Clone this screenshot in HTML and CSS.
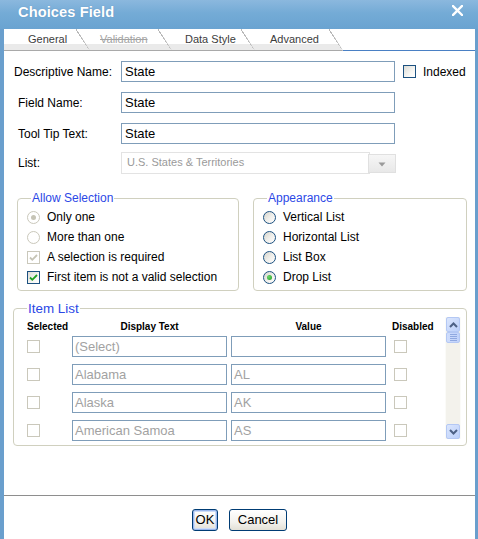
FILE: index.html
```html
<!DOCTYPE html>
<html>
<head>
<meta charset="utf-8">
<title>Choices Field</title>
<link rel="stylesheet" href="styles.css">
</head>
<body>
<div class="window">
  <div class="titlebar">
    <span class="title">Choices Field</span>
    <svg class="close" width="11" height="11" viewBox="0 0 11 11"><path d="M1 1L10 10M10 1L1 10" stroke="#fff" stroke-width="2.4" stroke-linecap="square"/></svg>
  </div>
  <div class="content">
    <div class="tabs">
      <div class="tab t1">General</div>
      <div class="tab t2"><span class="disabled-tab">Validation</span></div>
      <div class="tab t3">Data Style</div>
      <div class="tab t4">Advanced</div>
      <div class="tabfill"></div>
    </div>
    <div class="form">
      <div class="row">
        <div class="label wide">Descriptive Name:</div>
        <div class="textbox">State</div>
        <span class="cb idx"></span>
        <span class="cblabel">Indexed</span>
      </div>
      <div class="row">
        <div class="label">Field Name:</div>
        <div class="textbox">State</div>
      </div>
      <div class="row">
        <div class="label">Tool Tip Text:</div>
        <div class="textbox">State</div>
      </div>
      <div class="row selrow">
        <div class="label">List:</div>
        <div class="select">U.S. States &amp; Territories</div>
        <div class="dropbtn"><svg width="8" height="5" viewBox="0 0 8 5"><path d="M0.5 0.5H7.5L4 4.5Z" fill="#9a9a9a"/></svg></div>
      </div>

      <div class="groups">
        <fieldset class="group allow">
          <legend>Allow Selection</legend>
          <div class="opt"><span class="radio dis on"></span>Only one</div>
          <div class="opt"><span class="radio dis"></span>More than one</div>
          <div class="opt"><span class="cb dis"><svg width="11" height="11" viewBox="0 0 11 11"><path d="M2 5.5L4.3 7.8L9 3" fill="none" stroke="#c6c4b6" stroke-width="1.8"/></svg></span>A selection is required</div>
          <div class="opt"><span class="cb"><svg width="11" height="11" viewBox="0 0 11 11"><path d="M2 5.5L4.3 7.8L9 3" fill="none" stroke="#21a121" stroke-width="1.8"/></svg></span>First item is not a valid selection</div>
        </fieldset>
        <fieldset class="group appear">
          <legend>Appearance</legend>
          <div class="opt"><span class="radio"></span>Vertical List</div>
          <div class="opt"><span class="radio"></span>Horizontal List</div>
          <div class="opt"><span class="radio"></span>List Box</div>
          <div class="opt"><span class="radio on"></span>Drop List</div>
        </fieldset>
      </div>

      <fieldset class="group items">
        <legend>Item List</legend>
        <div class="itemwrap">
          <div class="scrollarea">
            <div class="grid head">
              <div class="h-sel">Selected</div>
              <div class="h-c">Display Text</div>
              <div class="h-c">Value</div>
              <div class="h-dis">Disabled</div>
            </div>
            <div class="grid irow">
              <span class="cb dis"></span>
              <div class="itext">(Select)</div>
              <div class="itext"></div>
              <span class="cb dis dcb"></span>
            </div>
            <div class="grid irow">
              <span class="cb dis"></span>
              <div class="itext">Alabama</div>
              <div class="itext">AL</div>
              <span class="cb dis dcb"></span>
            </div>
            <div class="grid irow">
              <span class="cb dis"></span>
              <div class="itext">Alaska</div>
              <div class="itext">AK</div>
              <span class="cb dis dcb"></span>
            </div>
            <div class="grid irow">
              <span class="cb dis"></span>
              <div class="itext">American Samoa</div>
              <div class="itext">AS</div>
              <span class="cb dis dcb"></span>
            </div>
          </div>
          <div class="scrollbar">
            <div class="sbtn"><svg width="9" height="6" viewBox="0 0 9 6"><path d="M1 5L4.5 1.5L8 5" fill="none" stroke="#4d6185" stroke-width="2"/></svg></div>
            <div class="thumb"><span></span><span></span><span></span><span></span></div>
            <div class="track"></div>
            <div class="sbtn"><svg width="9" height="6" viewBox="0 0 9 6"><path d="M1 1L4.5 4.5L8 1" fill="none" stroke="#4d6185" stroke-width="2"/></svg></div>
          </div>
        </div>
      </fieldset>
    </div>
    <div class="footer">
      <div class="btn ok">OK</div>
      <div class="btn">Cancel</div>
    </div>
  </div>
</div>
</body>
</html>
```

FILE: styles.css
```css
* { box-sizing: border-box; }
html, body { margin: 0; padding: 0; }
body {
  font-family: "Liberation Sans", Arial, sans-serif;
  background: #fff;
}
.window {
  width: 478px;
  height: 539px;
  display: flex;
  flex-direction: column;
  background: #6a9fcd;
}
.titlebar {
  height: 29px;
  flex: none;
  display: flex;
  align-items: flex-start;
  justify-content: space-between;
  padding: 3px 15px 0 18px;
  background: linear-gradient(#8bb8de, #74abd6 45%, #6aa3d1);
}
.title {
  color: #fff;
  font-weight: bold;
  font-size: 14.6px;
  line-height: 18px;
  letter-spacing: 0.1px;
  text-shadow: 0 0 1px rgba(40, 80, 130, 0.35);
}
.close { margin-top: 2px; }
.content {
  flex: 1;
  margin: 0 3px 0 4px;
  background: #fff;
  display: flex;
  flex-direction: column;
}
/* tabs */
.tabs {
  display: flex;
  height: 22px;
  flex: none;
}
.tab {
  position: relative;
  height: 22px;
  margin-right: -12px;
  font-size: 11px;
  line-height: 21px;
  color: #3c3c3c;
  background: linear-gradient(#fff 0, #fff 15px, #eaeaea 15px, #eaeaea 21px);
  border-bottom: 1px solid #a9a9a9;
  clip-path: polygon(0 0, calc(100% - 13px) 0, 100% 100%, 0 100%);
}
.tab::after {
  content: "";
  position: absolute;
  right: 0;
  top: 0;
  width: 14px;
  height: 21px;
  background: linear-gradient(to top right, transparent calc(50% - 0.9px), #b8b8b8 calc(50% - 0.9px), #b8b8b8 calc(50% + 0.2px), transparent calc(50% + 0.2px));
}
.t1 { width: 86px; padding-left: 24px; z-index: 4; }
.t2 { width: 94px; padding-left: 22px; z-index: 3; }
.t3 { width: 95px; padding-left: 25px; z-index: 2; }
.t4 { width: 100px; padding-left: 27px; z-index: 1; }
.disabled-tab { color: #a4a4a4; text-decoration: line-through; }
.tabfill {
  flex: 1;
  margin-left: 12px;
  height: 22px;
  border-bottom: 1px solid #4a80c4;
}
/* form */
.form {
  flex: 1;
  padding: 10px 0 0 14px;
  font-size: 12px;
  color: #000;
}
.row {
  display: flex;
  align-items: center;
  height: 21px;
  margin-bottom: 10px;
}
.label { width: 103px; flex: none; }
.label.wide { width: 107px; margin-left: -4px; }
.textbox {
  width: 274px;
  height: 21px;
  border: 1px solid #7f9db9;
  font-size: 13px;
  line-height: 19px;
  padding-left: 3px;
}
.idx { margin-left: 8px; }
.cblabel { margin-left: 7px; }
.selrow { height: 22px; margin-top: -2px; }
.select {
  width: 249px;
  height: 22px;
  border: 1px solid #e3e3e3;
  color: #9a9a9a;
  font-size: 11px;
  line-height: 14px;
  padding: 2px 0 0 5px;
}
.dropbtn {
  width: 28px;
  height: 19px;
  margin-left: -2px;
  margin-top: 1px;
  border: 1px solid #e0e0e0;
  background: linear-gradient(#f6f6f6, #e8e8e8);
  display: flex;
  align-items: center;
  justify-content: center;
  padding-top: 2px;
}
/* checkboxes & radios */
.cb {
  width: 13px;
  height: 13px;
  flex: none;
  border: 1px solid #1c5180;
  background: linear-gradient(135deg, #dcdbd5, #f6f6f3 60%, #fff);
  display: inline-flex;
  align-items: center;
  justify-content: center;
}
.cb.dis { border-color: #cac8bb; background: #fff; }
.radio {
  width: 13px;
  height: 13px;
  flex: none;
  border-radius: 50%;
  border: 1px solid #1c5180;
  background: linear-gradient(135deg, #d5d4cc, #f1f0ec 55%, #fff);
  display: inline-flex;
  align-items: center;
  justify-content: center;
}
.radio.dis { border-color: #cac8bb; background: #fff; }
.radio.on::after {
  content: "";
  width: 5px;
  height: 5px;
  border-radius: 50%;
  background: radial-gradient(circle at 35% 35%, #6ad46a, #21a121);
}
.radio.dis.on::after { background: #c6c4b6; }
/* groups */
fieldset.group {
  margin: 0;
  padding: 0;
  min-width: 0;
  border: 1px solid #d0d0bf;
  border-radius: 4px;
}
fieldset.group legend {
  padding: 0 1px;
  margin-left: 4px;
  color: #2b48e6;
  font-size: 12px;
  line-height: 14px;
}
.groups {
  display: flex;
  gap: 14px;
  margin: 17px 0 0 -1px;
}
.allow { width: 222px; padding: 2px 0 3px 9px !important; }
.appear { width: 214px; padding: 2px 0 3px 9px !important; }
.opt {
  display: flex;
  align-items: center;
  height: 20px;
}
.opt .cb, .opt .radio { margin-right: 7px; }
/* item list */
fieldset.items {
  width: 454px;
  margin: 10px 0 0 -5px;
  padding: 1px 5px 4px 13px;
}
fieldset.items legend { font-size: 13.4px; line-height: 15px; margin-left: 0; }
.itemwrap { display: flex; }
.scrollarea {
  width: 418px;
  height: 124px;
  overflow: hidden;
}
.grid {
  display: grid;
  grid-template-columns: 41px 155px 155px 1fr;
  column-gap: 4px;
  align-items: center;
}
.head {
  height: 17px;
  padding-top: 1px;
  font-size: 10px;
  font-weight: bold;
}
.h-c { text-align: center; }
.h-dis { margin-left: 2px; }
.irow { height: 21px; margin-top: 2px; }
.irow + .irow { margin-top: 7px; }
.itext {
  height: 21px;
  border: 1px solid #7f9db9;
  color: #a2a2a2;
  font-size: 13px;
  line-height: 19px;
  padding-left: 2px;
  white-space: nowrap;
  overflow: hidden;
}
.dcb { margin-left: 4px; }
.scrollbar {
  width: 16px;
  height: 122px;
  display: flex;
  flex-direction: column;
  background: #f3f2ec;
  border-left: 1px solid #fbfbf8;
  border-right: 1px solid #fbfbf8;
}
.sbtn {
  height: 15px;
  flex: none;
  border: 1px solid #b4c8f4;
  border-radius: 2px;
  background: linear-gradient(135deg, #dbe6fd, #bcd0fa);
  display: flex;
  align-items: center;
  justify-content: center;
}
.thumb {
  height: 11px;
  flex: none;
  border: 1px solid #b4c8f4;
  border-radius: 2px;
  background: linear-gradient(90deg, #cfddfc, #c0d2fb);
  display: flex;
  flex-direction: column;
  align-items: center;
  justify-content: center;
  gap: 1px;
}
.thumb span { width: 7px; height: 1px; background: #8fa8e0; }
.track { flex: 1; }
/* footer */
.footer {
  height: 44px;
  flex: none;
  border-top: 1px solid #8e8e8e;
  display: flex;
  justify-content: center;
  align-items: flex-start;
  gap: 11px;
  padding-top: 13px;
}
.btn {
  height: 22px;
  width: 58px;
  border: 1px solid #003c74;
  border-radius: 3px;
  background: linear-gradient(#ffffff, #f3f2ee 60%, #e3e0d6);
  font-size: 13px;
  line-height: 20px;
  text-align: center;
  color: #000;
}
.btn.ok {
  width: 26px;
  box-shadow: inset 0 0 0 1px #9ab7ee, inset 0 0 0 2px #cddcf7;
}
```
